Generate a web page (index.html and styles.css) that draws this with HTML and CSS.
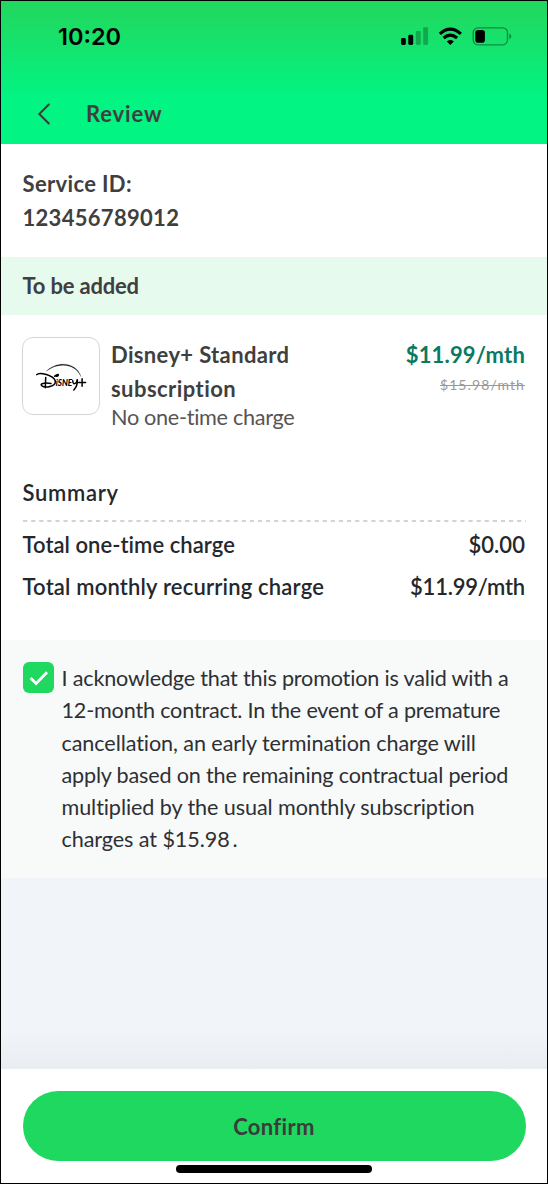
FILE: index.html
```html
<!DOCTYPE html>
<html lang="en">
<head>
<meta charset="utf-8">
<title>Review</title>
<link rel="stylesheet" href="styles.css">
</head>
<body>
<div class="screen">
  <header class="header">
    <div class="status">
      <span class="clock">10:20</span>
      <svg class="status-icons" width="112" height="20" viewBox="400 27 112 20">
        <rect x="401" y="38" width="4.8" height="7" rx="1.4"/>
        <rect x="408.300" y="34.700" width="4.900" height="10.300" rx="1.400"/>
        <rect x="415.800" y="31" width="4.900" height="14" rx="1.400" opacity=".25"/>
        <rect x="423.200" y="27.300" width="4.900" height="17.700" rx="1.400" opacity=".25"/>
        <g fill="none" stroke="#000" stroke-width="3.100">
          <path d="M439.800 33.900Q450.300 24.300 460.900 33.900"/>
          <path d="M443.600 38Q450.300 32.100 457.100 38"/>
        </g>
        <path d="M446.800 41.400Q450.300 38.500 453.800 41.400L450.300 45Z"/>
        <rect x="473.200" y="27.800" width="34.300" height="17" rx="4.800" fill="none" stroke="#000" stroke-width="1.300" opacity=".38"/>
        <rect x="475.300" y="29.900" width="9.600" height="12.800" rx="2.800"/>
        <path d="M509.300 33.400Q511.300 34.500 511.300 36.300T509.300 39.200Z" opacity=".4"/>
      </svg>
    </div>
    <div class="nav">
      <svg class="back" width="16" height="24" viewBox="0 0 16 24"><path d="M13.800 2.500L4.300 12L13.800 21.500"/></svg>
      <h1 class="title">Review</h1>
    </div>
  </header>

  <section class="service">
    <div class="service-label">Service ID:</div>
    <div class="service-number">123456789012</div>
  </section>

  <h2 class="band">To be added</h2>

  <section class="product">
    <div class="logo">
      <svg width="54" height="32" viewBox="0 0 54 32">
        <path class="arc" d="M10.300 8.300C19-1.500 40-2.500 45 13.700C38.500-.8 21-.4 10.300 8.300Z"/>
        <g class="script">
          <path d="M.8 11.700C3 8.500 18 12.500 19.300 18C20.200 23.700 9 25.300 6 22.900C3.300 20.500 8 19.500 15 20.500"/>
          <path d="M9.700 14.500L9.300 24.700"/>
          <path d="M18.700 13.200Q22 10.600 22.300 12Q22 13.600 19.700 13"/>
          <path d="M36.700 17.700Q37 22.500 40.400 19.500L41.400 16.200Q41.700 23 37.800 27"/>
        </g>
        <text class="letters" x="19.700" y="23.100" textLength="16.500" lengthAdjust="spacingAndGlyphs">iSNE</text>
        <path class="plus" d="M46.100 15.700V23.300M42.700 19.500H49.600"/>
      </svg>
    </div>
    <div class="product-info">
      <div class="product-name">Disney+ Standard<br><span class="product-kind">subscription</span></div>
      <div class="product-note">No one-time charge</div>
    </div>
    <div class="prices">
      <div class="price">$11.99/mth</div>
      <s class="old-price">$15.98/mth</s>
    </div>
  </section>

  <section class="summary">
    <h2 class="summary-title">Summary</h2>
    <svg class="divider" width="503" height="2"><path d="M0 1H503"/></svg>
    <div class="total total-once"><span>Total one-time charge</span><span>$0.00</span></div>
    <div class="total total-month"><span>Total monthly recurring charge</span><span class="amount">$11.99/mth</span></div>
  </section>

  <section class="consent">
    <span class="checkbox"><svg width="31" height="31" viewBox="0 0 31 31"><path d="M7.600 16L13.100 21.500L24 10.300"/></svg></span>
    <p class="terms">I acknowledge that this promotion is valid with a<br>12-month contract. In the event of a premature<br><span class="wide">cancellation, an early termination charge will</span><br>apply based on the remaining contractual period<br><span class="wide">multiplied by the usual monthly subscription</span><br><span class="wide">charges at $15.98<span class="stop">.</span></span></p>
  </section>

  <div class="spacer"></div>

  <footer class="footer">
    <button class="confirm">Confirm</button>
    <div class="home-bar"></div>
  </footer>
</div>
</body>
</html>
```
FILE: styles.css
```css
* { box-sizing: border-box; }
body { margin: 0; background: #fff; }
.screen {
  width: 548px;
  height: 1184px;
  display: flex;
  flex-direction: column;
  border: 1px solid #000;
  background: #fff;
  font-family: Lato, "Liberation Sans", sans-serif;
  font-size: 22px;
  font-weight: 700;
  color: #3f3f3f;
  overflow: hidden;
}
h1, h2, p { margin: 0; font-size: inherit; font-weight: inherit; }
svg { display: block; flex: none; }
.header {
  height: 143px;
  flex: none;
  background: linear-gradient(#20d760 0, #20d960 10px, #02f483 98px, #02f483 100%);
}
.status {
  height: 72px;
  padding: 0 35px 0 57px;
  display: flex;
  justify-content: space-between;
  align-items: center;
}
.clock { font: 600 23.5px/30px Inter, sans-serif; color: #000; }
.nav { height: 81px; padding: 0 0 0 34px; display: flex; align-items: center; }
.back path { fill: none; stroke: #3b3b3b; stroke-width: 2; stroke-linecap: round; }
.title { margin-left: 35px; letter-spacing: .85px; }
.service { height: 113px; flex: none; padding: 23px 0 0 21.5px; line-height: 33.5px; }
.service-label { letter-spacing: .35px; }
.service-number { letter-spacing: .3px; }
.band {
  height: 58px;
  flex: none;
  padding-left: 21.5px;
  background: #e6faee;
  line-height: 57px;
  letter-spacing: -.2px;
}
.product { height: 155px; flex: none; padding: 22px 22px 0 21px; display: flex; align-items: flex-start; }
.logo {
  width: 78px;
  height: 78px;
  padding: 25px 0 0 13px;
  border: 1px solid #d6d6d6;
  border-radius: 11px;
}
.arc { fill: #111; stroke: #111; stroke-width: .2; }
.script path, .plus { fill: none; stroke: #000; stroke-width: 1.5; stroke-linecap: round; }
.letters { font: italic 900 9px Lato, sans-serif; fill: #000; }
.product-info { margin-left: 11px; padding-top: 1px; }
.product-name { line-height: 34px; letter-spacing: .35px; }
.product-kind { letter-spacing: .45px; }
.product-note { font-size: 21.7px; font-weight: 400; color: #555; line-height: 23px; letter-spacing: -.32px; }
.prices { margin-left: auto; padding-top: 1px; text-align: right; line-height: 34px; }
.price { color: #0b7a61; letter-spacing: .18px; }
.old-price { display: block; font-size: 14px; font-weight: 400; line-height: 25px; letter-spacing: 1.1px; color: #999; }
.summary { height: 170px; flex: none; padding: 7px 22px 0 21.5px; color: #24282d; font-weight: 600; }
.summary-title { line-height: 32px; letter-spacing: .7px; }
.divider { margin: 11px 0 2px; }
.divider path { stroke: #c5c5c5; stroke-width: 1.500; stroke-dasharray: 4.200 3.900; }
.total { display: flex; justify-content: space-between; line-height: 42px; }
.total-once { letter-spacing: .05px; }
.total-month { letter-spacing: .18px; }
.amount { letter-spacing: -.2px; }
.consent {
  height: 238px;
  flex: none;
  padding: 22px 0 0 21.5px;
  display: flex;
  gap: 8px;
  background: #f8faf9;
}
.checkbox { width: 31px; height: 31px; border-radius: 6px; background: #1fd860; }
.checkbox path { fill: none; stroke: #fff; stroke-width: 2.800; }
.terms { font-size: 21.6px; font-weight: 400; color: #2d3035; line-height: 32.300px; letter-spacing: -.18px; white-space: nowrap; }
.wide { letter-spacing: -.09px; }
.stop { margin-left: 3px; }
.spacer { flex: 1; background: linear-gradient(#f1f4f9 0, #f1f4f9 80%, #e9edf1 100%); }
.footer { height: 114px; flex: none; padding: 22px 21.5px 0; display: flex; flex-direction: column; align-items: center; }
.confirm {
  width: 100%;
  height: 70px;
  padding: 1px 0 0;
  border: 0;
  border-radius: 35px;
  background: #1fd860;
  font: inherit;
  letter-spacing: .35px;
  color: #3b3b3b;
}
.home-bar { width: 196px; height: 8px; margin-top: 4px; border-radius: 4px; background: #000; }
```
